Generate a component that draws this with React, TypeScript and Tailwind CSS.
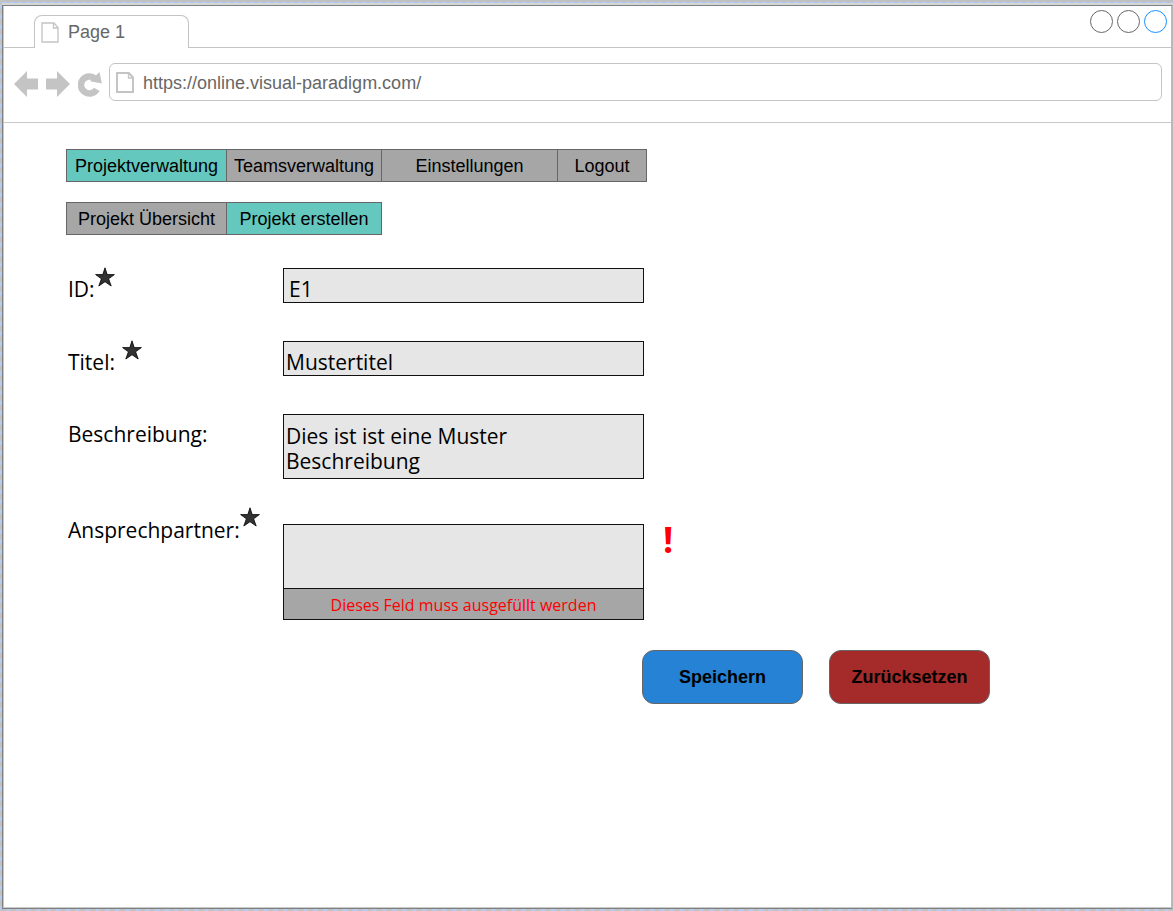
import type { ReactNode } from "react";

function PageIcon({ className, thick }: { className: string; thick: number }) {
  return (
    <svg viewBox="0 0 18 21" className={className} fill="none" stroke="#c4c4c4" strokeWidth={thick} aria-hidden="true">
      <path d="M1 1H13L17 5.500V20H1Z" />
      <path d="M12.500 1V6H17" strokeWidth={1.3} />
    </svg>
  );
}

function Star() {
  return (
    <svg viewBox="0 0 20 20" className="h-5 w-5 shrink-0" role="img" aria-label="Pflichtfeld">
      <path
        d="M10 0.800L12.200 7.600H19.400L13.600 11.800L16.200 19L10 14.700L3.800 19L6.400 11.800L0.600 7.600H7.800Z"
        fill="#333"
        stroke="#000"
        strokeWidth="0.800"
      />
    </svg>
  );
}

function Tab({ children, active, className }: { children: ReactNode; active?: boolean; className: string }) {
  return (
    <a
      href="#"
      className={`-ml-px flex h-[33px] items-center justify-center border border-[#666] text-lg leading-5 whitespace-nowrap text-black ${
        active ? "bg-[#64c8be]" : "bg-[#a6a6a6]"
      } ${className}`}
    >
      {children}
    </a>
  );
}

const label = "flex w-[215px] shrink-0 items-start";
const field = "block w-full resize-none border border-[#111] bg-[#e6e6e6] outline-none";

export default function App() {
  return (
    <div className="flex min-h-screen flex-col bg-[repeating-linear-gradient(135deg,#c2c2c2_0px,#c2c2c2_4px,#b4cdf0_4px,#b4cdf0_7px)] pb-[2px] pl-[2px] font-['Liberation_Sans',Arial,sans-serif]">
      <div className="h-0.5 bg-[#c0c0c0]" />
      <div className="h-px bg-[repeating-linear-gradient(90deg,#b0d0ff_0px,#b0d0ff_5px,#c0c0c0_5px,#c0c0c0_8px)]" />
      <div className="h-0.5 bg-[#d4d4d4]" />
      <div className="flex grow flex-col border border-r-2 border-[#808080] border-r-[#b8b8b8] bg-white pb-px pl-px shadow-[inset_1px_-1px_0_#c8c8c8]">
        <header>
          <div className="flex h-[42px] items-end">
            <div className="h-full w-[30px] border-b border-[#c4c4c4]" />
            <div className="flex h-[33px] w-[155px] items-center rounded-t-lg border border-b-0 border-[#c4c4c4] pl-1.5">
              <PageIcon className="h-[21px] w-[18px]" thick={1.3} />
              <span className="pl-[9px] text-lg leading-5 text-[#666]">Page 1</span>
            </div>
            <div className="flex h-full grow items-start justify-end gap-1 border-b border-[#c4c4c4] pt-1 pr-1">
              <button aria-label="Minimieren" className="h-[23px] w-[23px] rounded-full border border-[#666]" />
              <button aria-label="Maximieren" className="h-[23px] w-[23px] rounded-full border border-[#666]" />
              <button aria-label="Schließen" className="h-[23px] w-[23px] rounded-full border border-[#1890ff]" />
            </div>
          </div>
          <div className="flex h-[75px] items-start border-b border-[#c8c8c8] pt-[15px] pr-[9px] pl-2.5">
            <div className="flex h-[42px] items-center gap-2 pr-[7px]">
              <button aria-label="Zurück">
                <svg viewBox="0 0 24 26" className="h-[26px] w-6" fill="#c4c4c4">
                  <path d="M0 13L13 0V7.500H24V18.500H13V26Z" />
                </svg>
              </button>
              <button aria-label="Vorwärts">
                <svg viewBox="0 0 24 26" className="h-[26px] w-6" fill="#c4c4c4">
                  <path d="M24 13L11 0V7.500H0V18.500H11V26Z" />
                </svg>
              </button>
              <button aria-label="Neu laden">
                <svg viewBox="0 0 24 26" className="h-[26px] w-6">
                  <path d="M17 7.500A8.500 8.500 0 1 0 18.800 18.300" fill="none" stroke="#c4c4c4" strokeWidth="6.500" />
                  <path d="M21.500 1L23.800 12.500L12 10.200Z" fill="#c4c4c4" />
                </svg>
              </button>
            </div>
            <div className="flex h-[38px] grow items-center rounded-md border border-[#c4c4c4] pl-1.5">
              <PageIcon className="h-[21px] w-[18px]" thick={2} />
              <input
                aria-label="Adresse"
                defaultValue="https://online.visual-paradigm.com/"
                className="grow pt-0.5 pl-[9px] text-lg leading-5 text-[#666] outline-none"
              />
            </div>
          </div>
        </header>

        <main className="pt-[26px] pb-10 pl-[62px]">
          <nav aria-label="Hauptnavigation" className="flex pl-px">
            <Tab active className="w-[161px]">Projektverwaltung</Tab>
            <Tab className="w-[156px]">Teamsverwaltung</Tab>
            <Tab className="w-[177px]">Einstellungen</Tab>
            <Tab className="w-[90px]">Logout</Tab>
          </nav>
          <nav aria-label="Projekt" className="mt-5 flex pl-px">
            <Tab className="w-[161px]">Projekt Übersicht</Tab>
            <Tab active className="w-[156px]">Projekt erstellen</Tab>
          </nav>

          <form className="mt-8 pl-0.5 font-['Open_Sans','Noto_Sans',sans-serif] text-[21px] leading-[25px] text-black">
            <div className="flex">
              <label htmlFor="id" className={label}>
                <span className="pt-2.5">ID:</span>
                <Star />
              </label>
              <div className="w-[361px] pt-px">
                <input id="id" defaultValue="E1" className={`${field} h-[35px] px-[5px] pt-[7px]`} />
              </div>
            </div>
            <div className="mt-[37px] flex">
              <label htmlFor="titel" className={`${label} gap-[7px]`}>
                <span className="pt-2.5">Titel:</span>
                <Star />
              </label>
              <div className="w-[361px] pt-px">
                <input id="titel" defaultValue="Mustertitel" className={`${field} h-[35px] px-0.5 pt-[7px]`} />
              </div>
            </div>
            <div className="mt-[38px] flex">
              <label htmlFor="beschreibung" className={label}>
                <span className="pt-2">Beschreibung:</span>
              </label>
              <div className="w-[361px]">
                <textarea
                  id="beschreibung"
                  defaultValue={"Dies ist ist eine Muster\nBeschreibung"}
                  className={`${field} h-[65px] overflow-hidden px-0.5 pt-[9px]`}
                />
              </div>
            </div>
            <div className="mt-7 flex">
              <label htmlFor="partner" className={label}>
                <span className="pt-[11px]">Ansprechpartner:</span>
                <Star />
              </label>
              <div className="w-[361px] pt-[17px]">
                <textarea id="partner" aria-describedby="partner-error" className={`${field} h-[65px] overflow-hidden`} />
                <p
                  id="partner-error"
                  className="-mt-px h-8 border border-[#111] bg-[#a6a6a6] text-center text-base leading-8 text-[#ff0000]"
                >
                  Dieses Feld muss ausgefüllt werden
                </p>
              </div>
              <span className="pt-[13px] pl-[19px] text-4xl font-bold text-[#ff0000]">!</span>
            </div>
            <div className="mt-[30px] flex gap-[26px] pl-[574px] font-['Liberation_Sans',Arial,sans-serif] text-lg font-bold">
              <button type="button" className="h-[54px] w-[161px] rounded-xl border border-[#666] bg-[#2682d5]">
                Speichern
              </button>
              <button type="reset" className="h-[54px] w-[161px] rounded-xl border border-[#666] bg-[#a52a2a]">
                Zurücksetzen
              </button>
            </div>
          </form>
        </main>
      </div>
    </div>
  );
}
